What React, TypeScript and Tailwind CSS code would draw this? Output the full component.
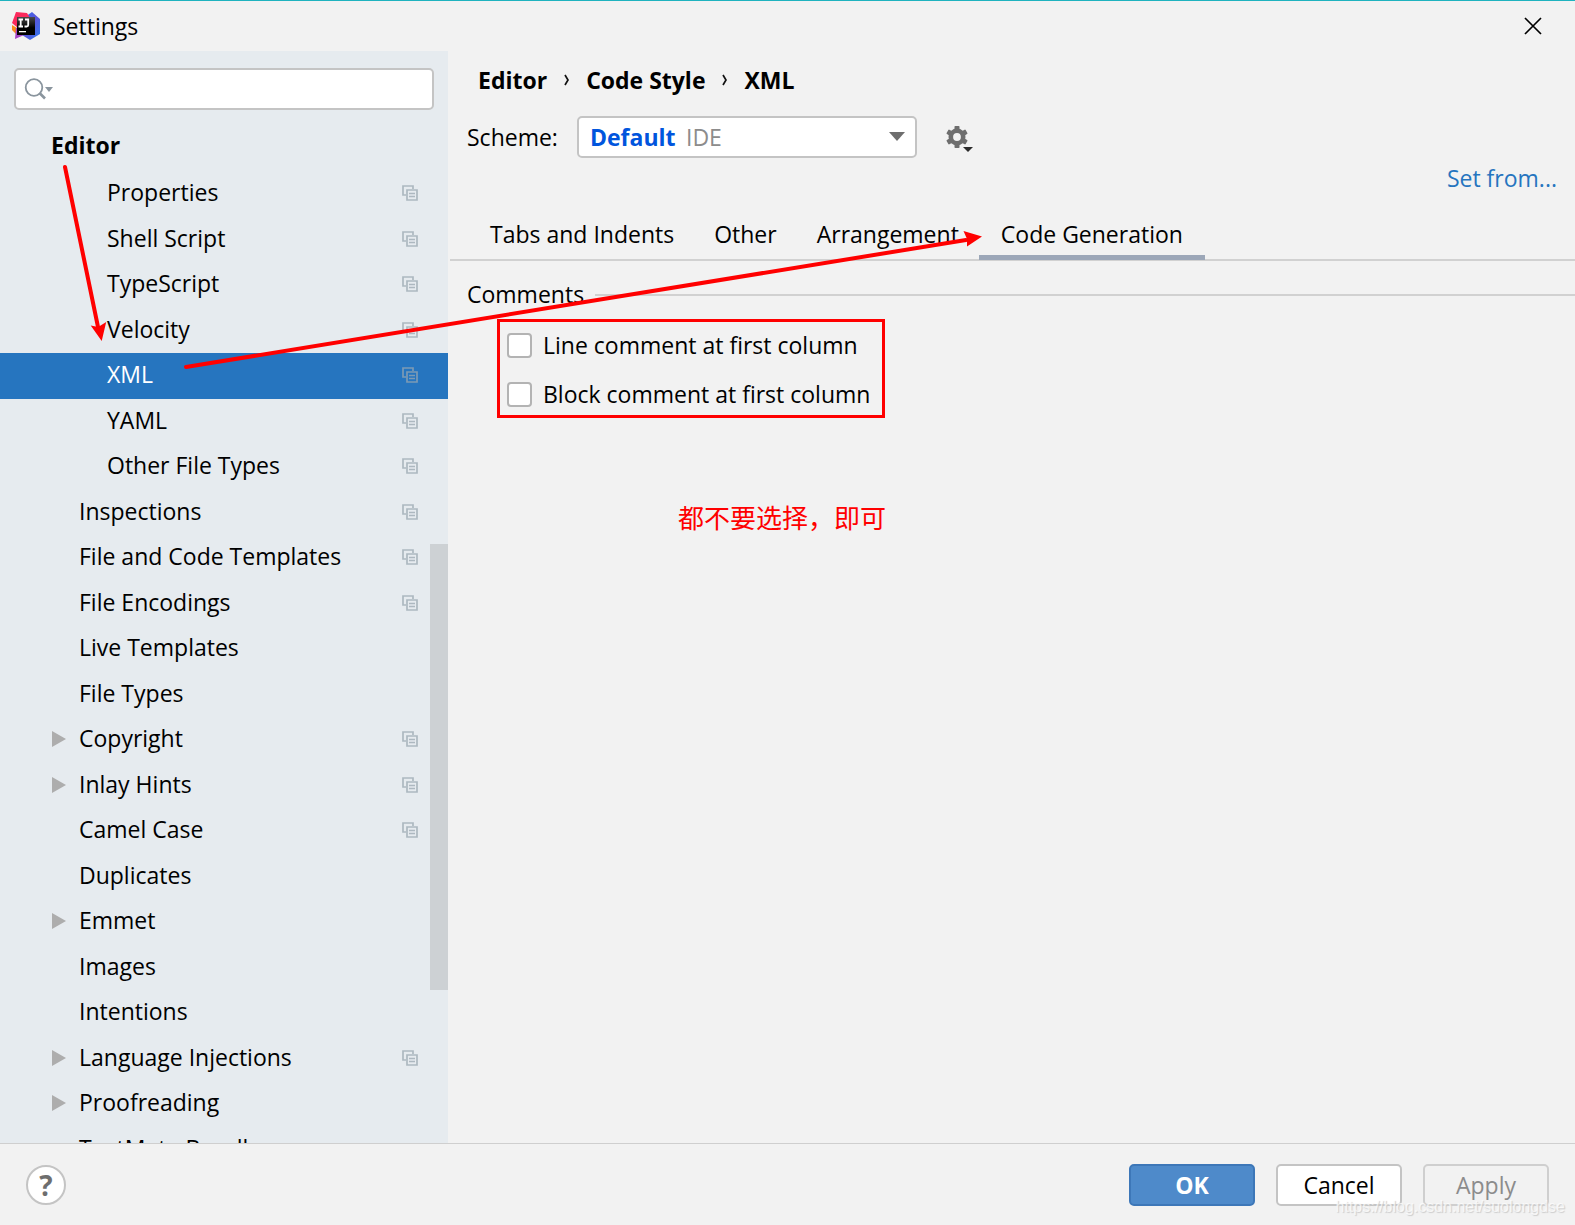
import React from "react";

type Item = {
  label: string;
  level?: 1 | 2;
  scoped?: boolean;
  expandable?: boolean;
  selected?: boolean;
};

const items: Item[] = [
  { label: "Properties", level: 2, scoped: true },
  { label: "Shell Script", level: 2, scoped: true },
  { label: "TypeScript", level: 2, scoped: true },
  { label: "Velocity", level: 2, scoped: true },
  { label: "XML", level: 2, scoped: true, selected: true },
  { label: "YAML", level: 2, scoped: true },
  { label: "Other File Types", level: 2, scoped: true },
  { label: "Inspections", scoped: true },
  { label: "File and Code Templates", scoped: true },
  { label: "File Encodings", scoped: true },
  { label: "Live Templates" },
  { label: "File Types" },
  { label: "Copyright", scoped: true, expandable: true },
  { label: "Inlay Hints", scoped: true, expandable: true },
  { label: "Camel Case", scoped: true },
  { label: "Duplicates" },
  { label: "Emmet", expandable: true },
  { label: "Images" },
  { label: "Intentions" },
  { label: "Language Injections", scoped: true, expandable: true },
  { label: "Proofreading", expandable: true },
  { label: "TextMate Bundles" },
];

function AppLogo() {
  return (
    <svg className="size-7 shrink-0" viewBox="0 0 28 28" aria-hidden="true">
      <defs>
        <linearGradient id="logoBlue" x1="0" y1="0" x2="1" y2="1">
          <stop offset="0" stopColor="#2f6fe8" />
          <stop offset="0.5" stopColor="#5b55dc" />
          <stop offset="1" stopColor="#2c7cf0" />
        </linearGradient>
        <linearGradient id="logoDark" x1="0" y1="0" x2="0" y2="1">
          <stop offset="0" stopColor="#4a4a4a" />
          <stop offset="0.6" stopColor="#000" />
        </linearGradient>
      </defs>
      <path d="M0 13l5 3-1 6-4-4z" fill="#f98a1c" />
      <path d="M4 16l-1 11 9-4-3-8z" fill="#a443c4" />
      <path d="M20 0l8 7v15l-10 6-8-5 3-18z" fill="url(#logoBlue)" />
      <path d="M4 0l11 1 3 5-12 10-6-5z" fill="#fb2a5c" />
      <path d="M5 5h18v18H5z" fill="url(#logoDark)" />
      <path d="M6.500 7.500h4.500M8.700 7.500v7M6.500 14.500h4.500M13 7.500h3.200v5.500q0 1.500-1.500 1.500h-2.200" fill="none" stroke="#fff" strokeWidth="1.800" />
      <path d="M7 19h7v1.300H7z" fill="#fff" />
    </svg>
  );
}

function ScopeIcon() {
  return (
    <svg className="size-4 shrink-0" viewBox="0 0 16 16" fill="none" stroke="#9aa7b0" strokeOpacity="0.75" aria-hidden="true">
      <path d="M4 10H1V1h10v3" strokeWidth="1.700" />
      <path d="M5 5h10v10H5z" strokeWidth="1.700" />
      <path d="M7 8.500h6M7 11.500h6" strokeWidth="1.300" />
    </svg>
  );
}

function GearIcon() {
  const teeth = [0, 60, 120, 180, 240, 300];
  return (
    <svg className="h-8 w-8" viewBox="0 0 32 32" aria-hidden="true">
      <g fill="#6e6e6e">
        {teeth.map((angle) => (
          <path key={angle} d="M9.500 9V5.800q0-.8.800-.8h3.400q.8 0 .8.800V9z" transform={`rotate(${angle} 12 16)`} />
        ))}
      </g>
      <circle cx="12" cy="16" r="6.200" fill="none" stroke="#6e6e6e" strokeWidth="4.600" />
      <path d="M16 25h13l-6.500 6z" fill="#f2f2f2" />
      <path d="M18 26h10l-5 5z" fill="#2b2b2b" />
    </svg>
  );
}

function Sidebar() {
  return (
    <aside className="relative flex w-[448px] shrink-0 flex-col overflow-hidden bg-[#e6ebef] pt-[17px]">
      <label className="mx-3.5 flex h-[42px] shrink-0 items-center rounded-[5px] border-2 border-[#c4c4c4] bg-white pl-2">
        <svg className="h-6 w-8 shrink-0" viewBox="0 0 32 24" aria-hidden="true">
          <circle cx="10" cy="10.500" r="8.300" fill="none" stroke="#8a959e" strokeWidth="1.800" />
          <path d="M15.500 16l5.500 5.500" stroke="#8a959e" strokeWidth="2.600" />
          <path d="M21 10h8l-4 5z" fill="#8a959e" />
        </svg>
        <input type="search" aria-label="Search settings" className="min-w-0 flex-1 bg-transparent outline-none" />
      </label>
      <h2 className="mt-[15px] flex h-[46px] shrink-0 items-center pb-1.5 pl-[51px] font-bold">Editor</h2>
      <ul>
        {items.map((item) => (
          <li key={item.label} className="odd:h-[46px] even:h-[45px]">
            <button
              type="button"
              className={
                "flex h-full w-full items-center pr-[30px] pb-0.5 text-left " +
                (item.level === 2 ? "pl-[107px] " : "pl-[51px] ") +
                (item.selected ? "bg-[#2675bf] text-white" : "")
              }
            >
              {item.level !== 2 && (
                <span className="w-7 shrink-0">
                  {item.expandable && (
                    <svg className="h-4 w-4" viewBox="0 0 16 16" aria-hidden="true">
                      <path d="M1 0l14 8-14 8z" fill="#adadad" />
                    </svg>
                  )}
                </span>
              )}
              <span className="flex-1 pb-0.5 whitespace-nowrap">{item.label}</span>
              {item.scoped && <ScopeIcon />}
            </button>
          </li>
        ))}
      </ul>
      <div className="absolute top-[493px] right-0 h-[446px] w-[18px] bg-[#cdd1d4]" />
    </aside>
  );
}

function Breadcrumb() {
  return (
    <nav aria-label="Breadcrumb" className="flex h-8 items-center gap-[17px] pl-7 font-bold">
      <span>Editor</span>
      <Chevron />
      <span>Code Style</span>
      <Chevron />
      <span>XML</span>
    </nav>
  );
}

function Chevron() {
  return (
    <svg className="h-3 w-[5px]" viewBox="0 0 5 12" aria-hidden="true">
      <path d="M1 1l3 5-3 5" fill="none" stroke="#111" strokeWidth="1.700" />
    </svg>
  );
}

const tabs = ["Tabs and Indents", "Other", "Arrangement", "Code Generation"];

function Content() {
  return (
    <main className="flex min-w-0 flex-1 flex-col pl-0.5">
      <div className="pt-[13px]">
        <Breadcrumb />
      </div>
      <div className="mt-5 flex h-[42px] items-center pl-[17px]">
        <label htmlFor="scheme" className="w-[110px]">Scheme:</label>
        <div className="relative h-full w-[340px]">
          <select
            id="scheme"
            className="h-full w-full appearance-none rounded-[5px] border-2 border-[#c4c4c4] bg-white pl-[11px] font-bold text-[#0055dd]"
          >
            <option>Default</option>
          </select>
          <span className="pointer-events-none absolute inset-y-0 left-[109px] flex items-center text-[#8c8c8c]">IDE</span>
          <svg className="pointer-events-none absolute top-4 right-3 h-[9px] w-4" viewBox="0 0 16 9" aria-hidden="true">
            <path d="M0 0h16l-8 9z" fill="#6e6e6e" />
          </svg>
        </div>
        <button type="button" aria-label="Scheme actions" className="ml-7">
          <GearIcon />
        </button>
      </div>
      <div className="mt-1 flex justify-end pr-[18px]">
        <a href="#set-from" className="leading-8 text-[#2675bf]">Set from...</a>
      </div>
      <div role="tablist" className="mt-4 flex h-[51px] border-b-2 border-[#d1d1d1] pl-5">
        {tabs.map((tab) => (
          <button
            key={tab}
            type="button"
            role="tab"
            aria-selected={tab === "Code Generation"}
            className="h-[50px] border-b-5 border-transparent px-5 pt-0.5 whitespace-nowrap aria-selected:border-[#9ca7b8] aria-selected:px-[22px]"
          >
            {tab}
          </button>
        ))}
      </div>
      <section className="pt-[18px] pl-[17px]">
        <h3 className="flex h-8 items-center gap-[11px]">
          <span className="pb-0.5">Comments</span>
          <span className="h-0.5 flex-1 bg-[#d1d1d1]" />
        </h3>
        <div className="mt-2 ml-[30px] flex h-[99px] w-[388px] flex-col justify-center border-3 border-[#ff0000] pt-0.5 pl-[7px]">
          {["Line comment at first column", "Block comment at first column"].map((text) => (
            <label key={text} className="flex h-[49px] shrink-0 items-center gap-[11px] whitespace-nowrap">
              <input
                type="checkbox"
                className="size-[25px] shrink-0 appearance-none rounded-[4px] border-2 border-[#b3b3b3] bg-white"
              />
              {text}
            </label>
          ))}
        </div>
        <p className="mt-[79px] ml-[211px] font-['Noto_Sans_CJK_SC',sans-serif] text-[26px] leading-10 text-[#ff0000]">
          都不要选择，即可
        </p>
      </section>
    </main>
  );
}

function Footer() {
  return (
    <footer className="relative flex h-[82px] shrink-0 items-center border-t border-[#cfcfcf] pr-[26px] pl-[26px]">
      <button
        type="button"
        aria-label="Help"
        className="flex size-10 items-center justify-center rounded-full border-2 border-[#c4c4c4] bg-white text-[28px] font-bold text-[#6e6e6e]"
      >
        ?
      </button>
      <div className="ml-auto flex items-center gap-[21px]">
        <button
          type="button"
          className="h-[42px] w-[126px] rounded-[5px] border-2 border-[#3d77b8] bg-[#4e8aca] font-bold text-white"
        >
          OK
        </button>
        <button type="button" className="h-[42px] w-[126px] rounded-[5px] border-2 border-[#c4c4c4] bg-white">
          Cancel
        </button>
        <button type="button" disabled className="h-[42px] w-[126px] rounded-[5px] border-2 border-[#cfcfcf] text-[#8c8c8c]">
          Apply
        </button>
      </div>
      <span className="pointer-events-none absolute right-2.5 bottom-1.5 font-['Liberation_Sans',sans-serif] text-base leading-6 text-white/70 [text-shadow:1px_1px_1px_#cccccc]">
        https://blog.csdn.net/suolongdse
      </span>
    </footer>
  );
}

function Arrows() {
  return (
    <svg
      className="pointer-events-none absolute top-0 left-0 h-[400px] w-[1000px]"
      viewBox="0 0 1000 400"
      aria-hidden="true"
    >
      <g stroke="#ff0000" strokeWidth="4" strokeLinecap="round">
        <path d="M65 167l33 160" />
        <path d="M186 367l780-127" />
      </g>
      <g fill="#ff0000">
        <path d="M101.700 341l-11-15.500 7.500 1.500 8-5z" />
        <path d="M982 236.500l-18.500-5.500 3.500 8 0 7.500z" />
      </g>
    </svg>
  );
}

export default function App() {
  return (
    <div className="relative flex h-screen flex-col overflow-hidden bg-[#f2f2f2] font-['Open_Sans',sans-serif] text-[23px] leading-8 text-black">
      <header className="flex h-[51px] shrink-0 items-center border-t border-[#1fb3bf] pr-[33px] pl-3">
        <AppLogo />
        <h1 className="ml-[13px] flex-1">Settings</h1>
        <button type="button" aria-label="Close">
          <svg className="size-[18px]" viewBox="0 0 18 18" aria-hidden="true">
            <path d="M1 1l16 16M17 1L1 17" stroke="#000" strokeWidth="1.700" />
          </svg>
        </button>
      </header>
      <div className="flex min-h-0 flex-1">
        <Sidebar />
        <Content />
      </div>
      <Footer />
      <Arrows />
    </div>
  );
}
